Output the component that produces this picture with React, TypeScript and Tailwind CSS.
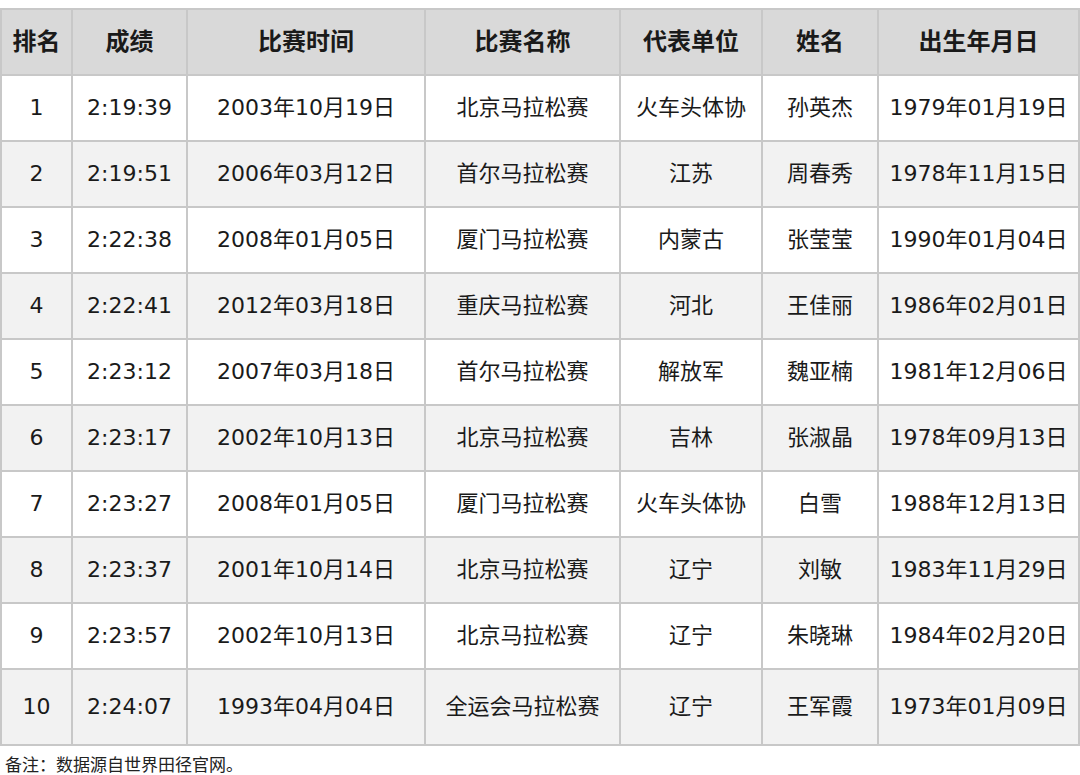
const rows = [
  ['1', '2:19:39', '2003年10月19日', '北京马拉松赛', '火车头体协', '孙英杰', '1979年01月19日'],
  ['2', '2:19:51', '2006年03月12日', '首尔马拉松赛', '江苏', '周春秀', '1978年11月15日'],
  ['3', '2:22:38', '2008年01月05日', '厦门马拉松赛', '内蒙古', '张莹莹', '1990年01月04日'],
  ['4', '2:22:41', '2012年03月18日', '重庆马拉松赛', '河北', '王佳丽', '1986年02月01日'],
  ['5', '2:23:12', '2007年03月18日', '首尔马拉松赛', '解放军', '魏亚楠', '1981年12月06日'],
  ['6', '2:23:17', '2002年10月13日', '北京马拉松赛', '吉林', '张淑晶', '1978年09月13日'],
  ['7', '2:23:27', '2008年01月05日', '厦门马拉松赛', '火车头体协', '白雪', '1988年12月13日'],
  ['8', '2:23:37', '2001年10月14日', '北京马拉松赛', '辽宁', '刘敏', '1983年11月29日'],
  ['9', '2:23:57', '2002年10月13日', '北京马拉松赛', '辽宁', '朱晓琳', '1984年02月20日'],
  ['10', '2:24:07', '1993年04月04日', '全运会马拉松赛', '辽宁', '王军霞', '1973年01月09日'],
]

const headers = ['排名', '成绩', '比赛时间', '比赛名称', '代表单位', '姓名', '出生年月日']
const widths = [71, 115, 238, 195, 142, 116, 201]

export default function App() {
  return (
    <div
      className="h-[775px] w-[1080px] overflow-hidden bg-white pt-2 text-[#1a1a1a]"
      style={{ fontFamily: '"DejaVu Sans", "Noto Sans CJK SC", sans-serif' }}
    >
      <table className="w-[1078px] table-fixed border-collapse border-2 border-[#c8c8c8]">
        <colgroup>
          {widths.map((w, i) => (
            <col key={i} style={{ width: w }} />
          ))}
        </colgroup>
        <thead>
          <tr className="h-[66px] bg-[#d9d9d9]">
            {headers.map((h) => (
              <th key={h} className="border-2 border-[#c8c8c8] p-0 text-center text-[24px] font-bold leading-none">
                {h}
              </th>
            ))}
          </tr>
        </thead>
        <tbody>
          {rows.map((r, i) => (
            <tr
              key={r[0]}
              className={`${i === 9 ? 'h-[76px]' : 'h-[66px]'} ${i % 2 === 1 ? 'bg-[#f2f2f2]' : 'bg-white'}`}
            >
              {r.map((c, j) => (
                <td key={j} className="border-2 border-[#c8c8c8] p-0 text-center text-[22px] leading-none">
                  {c}
                </td>
              ))}
            </tr>
          ))}
        </tbody>
      </table>
      <p
        className="mt-[9px] pl-[5px] text-[17px] leading-none text-[#222]"
        style={{ fontFamily: '"Noto Sans CJK SC", sans-serif' }}
      >
        备注：数据源自世界田径官网。
      </p>
    </div>
  )
}
